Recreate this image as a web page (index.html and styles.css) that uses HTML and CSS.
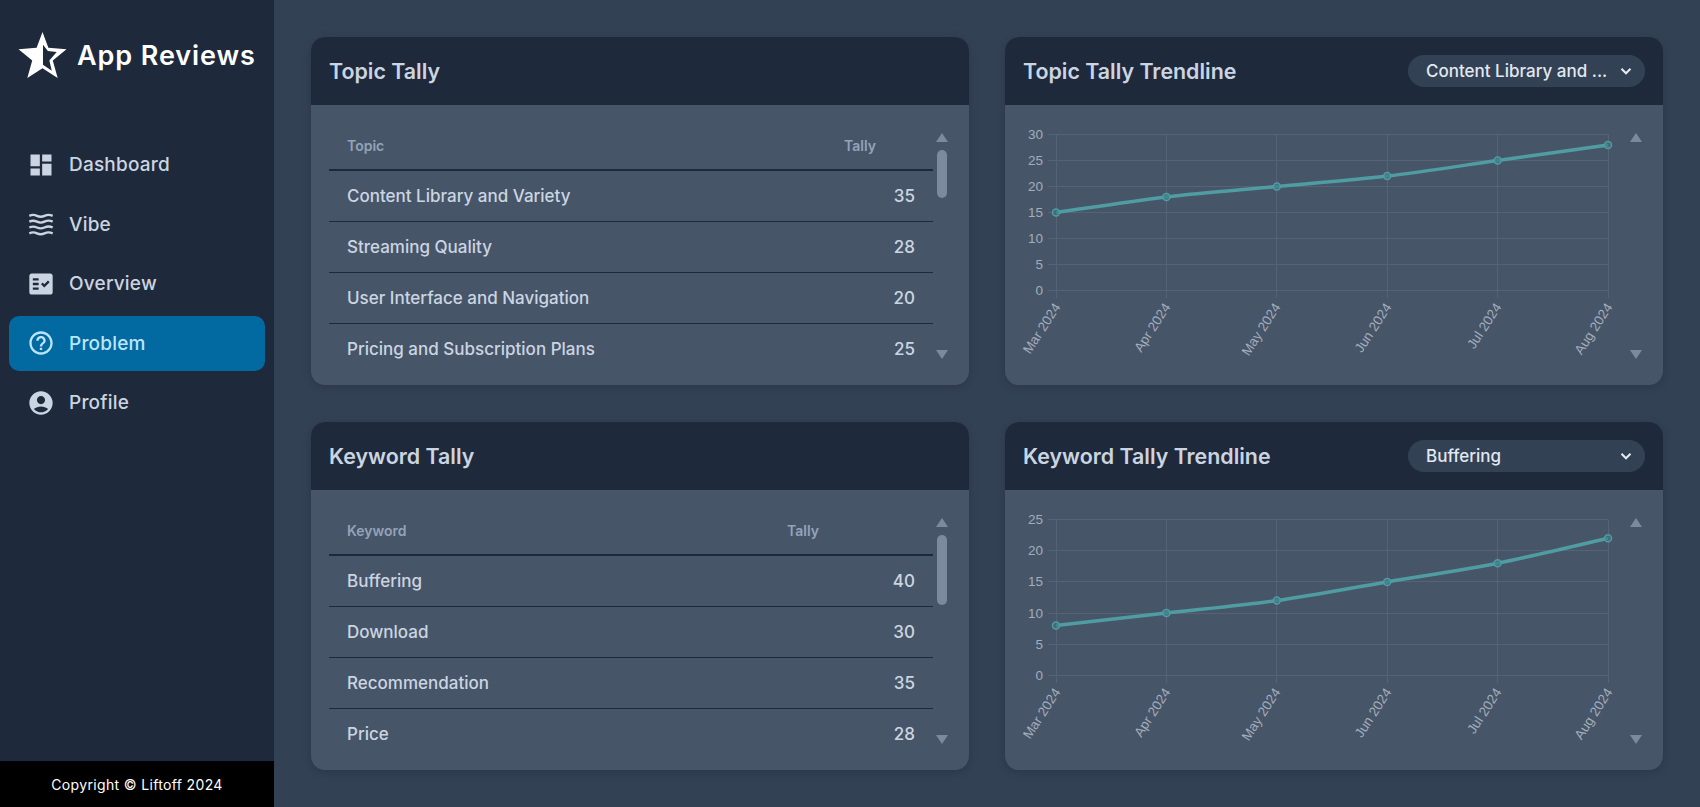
FILE: index.html
```html
<!DOCTYPE html>
<html lang="en">

<head>
    <meta charset="UTF-8">
    <meta name="viewport" content="width=device-width, initial-scale=1.0">
    <title>App Reviews - Problem</title>
    <link rel="stylesheet" href="styles.css">
</head>

<body>
    <aside class="sidebar">
        <div class="logo">
            <svg class="logo-star" viewBox="0 0 50 47">
                <path fill="#fff" fill-rule="evenodd" d="M25 0l6 16 18.500 1.500-14 11.500 5 18-15.500-10-15.500 10 5-18-14-11.500 18.500-1.500zM25.500 13v20.500l9 6-2.500-10.500 7.500-8.500-9-1z" />
            </svg>
            <span class="logo-text">App Reviews</span>
        </div>

        <nav class="nav">
            <a class="nav-item">
                <svg viewBox="0 0 24 24"><path d="M3 13h8V3H3v10zm0 8h8v-6H3v6zm10 0h8V11h-8v10zm0-18v6h8V3h-8z" /></svg>
                Dashboard
            </a>
            <a class="nav-item">
                <svg viewBox="0 0 24 24"><path class="wave" d="M2 5c2.500-1.200 4-1.200 6.500 0s4 1.200 6.500 0 4.500-1.200 7 0M2 10c2.500-1.200 4-1.200 6.500 0s4 1.200 6.500 0 4.500-1.200 7 0M2 15c2.500-1.200 4-1.200 6.500 0s4 1.200 6.500 0 4.500-1.200 7 0M2 20c2.500-1.200 4-1.200 6.500 0s4 1.200 6.500 0 4.500-1.200 7 0" /></svg>
                Vibe
            </a>
            <a class="nav-item">
                <svg viewBox="0 0 24 24"><path d="M20 3H4c-1.100 0-2 .9-2 2v14c0 1.100.9 2 2 2h16c1.100 0 2-.9 2-2V5c0-1.100-.9-2-2-2zM10 17H5v-2h5v2zm0-4H5v-2h5v2zm0-4H5V7h5v2zm4.820 6L12 12.160l1.410-1.410 1.410 1.420L17.990 9l1.420 1.420L14.820 15z" /></svg>
                Overview
            </a>
            <a class="nav-item active">
                <svg viewBox="0 0 24 24"><path d="M11 18h2v-2h-2v2zm1-16C6.480 2 2 6.480 2 12s4.480 10 10 10 10-4.480 10-10S17.520 2 12 2zm0 18c-4.410 0-8-3.590-8-8s3.590-8 8-8 8 3.590 8 8-3.590 8-8 8zm0-14c-2.210 0-4 1.790-4 4h2c0-1.100.9-2 2-2s2 .9 2 2c0 2-3 1.750-3 5h2c0-2.250 3-2.500 3-5 0-2.210-1.790-4-4-4z" /></svg>
                Problem
            </a>
            <a class="nav-item">
                <svg viewBox="0 0 24 24"><path d="M12 2C6.480 2 2 6.480 2 12s4.480 10 10 10 10-4.480 10-10S17.520 2 12 2zm0 4c1.930 0 3.500 1.570 3.500 3.500S13.930 13 12 13s-3.500-1.570-3.500-3.500S10.070 6 12 6zm0 14c-2.030 0-4.430-.82-6.140-2.880C7.550 15.800 9.680 15 12 15s4.450.8 6.140 2.120C16.430 19.180 14.030 20 12 20z" /></svg>
                Profile
            </a>
        </nav>

        <footer class="copyright">Copyright © Liftoff 2024</footer>
    </aside>

    <main class="main">
        <!-- Topic table -->
        <section class="card">
            <header class="card-header">
                <h2>Topic Tally</h2>
            </header>
            <div class="card-body">
                <div class="table-wrap">
                    <table class="tally-table topic-table">
                        <thead>
                            <tr><th>Topic</th><th>Tally</th></tr>
                        </thead>
                        <tbody>
                            <tr><td>Content Library and Variety</td><td class="num">35</td></tr>
                            <tr><td>Streaming Quality</td><td class="num">28</td></tr>
                            <tr><td>User Interface and Navigation</td><td class="num">20</td></tr>
                            <tr><td>Pricing and Subscription Plans</td><td class="num">25</td></tr>
                        </tbody>
                    </table>
                </div>
                <div class="scrollbar">
                    <span class="arrow-up"></span>
                    <span class="thumb"></span>
                    <span class="arrow-down"></span>
                </div>
            </div>
        </section>

        <!-- Topic trendline -->
        <section class="card">
            <header class="card-header">
                <h2>Topic Tally Trendline</h2>
                <div class="select">
                    <span class="select-text">Content Library and ...</span>
                    <svg viewBox="0 0 24 24"><path d="M6 9l6 6 6-6" /></svg>
                </div>
            </header>
            <div class="card-body">
                <svg class="chart" viewBox="0 0 604 250">
                    <g class="grid">
                        <path d="M25 12.500H585M25 38.500H585M25 64.500H585M25 90.500H585M25 116.500H585M25 142.500H585M25 168.500H585" />
                        <path d="M33.500 12.500V176M143.500 12.500V176M253.500 12.500V176M364.500 12.500V176M474.500 12.500V176M585.500 12.500V176" />
                    </g>
                    <g class="y-labels">
                        <text x="20" y="17">30</text>
                        <text x="20" y="43">25</text>
                        <text x="20" y="69">20</text>
                        <text x="20" y="95">15</text>
                        <text x="20" y="121">10</text>
                        <text x="20" y="147">5</text>
                        <text x="20" y="173">0</text>
                    </g>
                    <g class="x-labels">
                        <text transform="translate(38 185) rotate(-57)">Mar 2024</text>
                        <text transform="translate(148 185) rotate(-57)">Apr 2024</text>
                        <text transform="translate(258 185) rotate(-57)">May 2024</text>
                        <text transform="translate(369 185) rotate(-57)">Jun 2024</text>
                        <text transform="translate(479 185) rotate(-57)">Jul 2024</text>
                        <text transform="translate(590 185) rotate(-57)">Aug 2024</text>
                    </g>
                    <path class="line" d="M33 90.500C49.600 88.200 110.300 78.800 143.400 74.900C176.500 71 220.700 67.600 253.800 64.500C286.900 61.400 331.100 58 364.200 54.100C397.300 50.200 441.500 43.200 474.600 38.500C507.700 33.800 568.400 25.200 585 22.900" />
                    <g class="points">
                        <circle cx="33" cy="90.500" r="3.500" />
                        <circle cx="143.400" cy="74.900" r="3.500" />
                        <circle cx="253.800" cy="64.500" r="3.500" />
                        <circle cx="364.200" cy="54.100" r="3.500" />
                        <circle cx="474.600" cy="38.500" r="3.500" />
                        <circle cx="585" cy="22.900" r="3.500" />
                    </g>
                </svg>
                <div class="scrollbar">
                    <span class="arrow-up"></span>
                    <span class="arrow-down"></span>
                </div>
            </div>
        </section>

        <!-- Keyword table -->
        <section class="card">
            <header class="card-header">
                <h2>Keyword Tally</h2>
            </header>
            <div class="card-body">
                <div class="table-wrap">
                    <table class="tally-table keyword-table">
                        <thead>
                            <tr><th>Keyword</th><th>Tally</th></tr>
                        </thead>
                        <tbody>
                            <tr><td>Buffering</td><td class="num">40</td></tr>
                            <tr><td>Download</td><td class="num">30</td></tr>
                            <tr><td>Recommendation</td><td class="num">35</td></tr>
                            <tr><td>Price</td><td class="num">28</td></tr>
                        </tbody>
                    </table>
                </div>
                <div class="scrollbar">
                    <span class="arrow-up"></span>
                    <span class="thumb thumb-long"></span>
                    <span class="arrow-down"></span>
                </div>
            </div>
        </section>

        <!-- Keyword trendline -->
        <section class="card">
            <header class="card-header">
                <h2>Keyword Tally Trendline</h2>
                <div class="select">
                    <span class="select-text">Buffering</span>
                    <svg viewBox="0 0 24 24"><path d="M6 9l6 6 6-6" /></svg>
                </div>
            </header>
            <div class="card-body">
                <svg class="chart" viewBox="0 0 604 250">
                    <g class="grid">
                        <path d="M25 12.500H585M25 43.500H585M25 74.500H585M25 106.500H585M25 137.500H585M25 168.500H585" />
                        <path d="M33.500 12.500V176M143.500 12.500V176M253.500 12.500V176M364.500 12.500V176M474.500 12.500V176M585.500 12.500V176" />
                    </g>
                    <g class="y-labels">
                        <text x="20" y="17">25</text>
                        <text x="20" y="48">20</text>
                        <text x="20" y="79">15</text>
                        <text x="20" y="111">10</text>
                        <text x="20" y="142">5</text>
                        <text x="20" y="173">0</text>
                    </g>
                    <g class="x-labels">
                        <text transform="translate(38 185) rotate(-57)">Mar 2024</text>
                        <text transform="translate(148 185) rotate(-57)">Apr 2024</text>
                        <text transform="translate(258 185) rotate(-57)">May 2024</text>
                        <text transform="translate(369 185) rotate(-57)">Jun 2024</text>
                        <text transform="translate(479 185) rotate(-57)">Jul 2024</text>
                        <text transform="translate(590 185) rotate(-57)">Aug 2024</text>
                    </g>
                    <path class="line" d="M33 118.600C49.600 116.700 110.300 109.850 143.400 106.100C176.500 102.350 220.700 98.300 253.800 93.600C286.900 88.900 331.100 80.500 364.200 74.900C397.300 69.300 441.500 62.800 474.600 56.200C507.700 49.600 568.400 35 585 31.200" />
                    <g class="points">
                        <circle cx="33" cy="118.600" r="3.500" />
                        <circle cx="143.400" cy="106.100" r="3.500" />
                        <circle cx="253.800" cy="93.600" r="3.500" />
                        <circle cx="364.200" cy="74.900" r="3.500" />
                        <circle cx="474.600" cy="56.200" r="3.500" />
                        <circle cx="585" cy="31.200" r="3.500" />
                    </g>
                </svg>
                <div class="scrollbar">
                    <span class="arrow-up"></span>
                    <span class="arrow-down"></span>
                </div>
            </div>
        </section>
    </main>
</body>

</html>
```

FILE: styles.css
```css
/* General Styles */
* {
    box-sizing: border-box;
}

body {
    font-family: Inter, "Liberation Sans", sans-serif;
    background-color: #334155;
    color: #cbd5e1;
    margin: 0;
    height: 807px;
    display: flex;
    overflow: hidden;
}

/* Sidebar */
.sidebar {
    width: 274px;
    flex-shrink: 0;
    background-color: #1e293b;
    display: flex;
    flex-direction: column;
}

.logo {
    display: flex;
    align-items: center;
    gap: 10px;
    height: 46px;
    margin: 32px 0 59px 18px;
}

.logo-star {
    width: 49px;
    height: 46px;
}

.logo-text {
    color: #fff;
    font-size: 27px;
    font-weight: 600;
    letter-spacing: 0.9px;
}

.nav {
    display: flex;
    flex-direction: column;
    gap: 4.5px;
    flex: 1;
    padding: 0 9px;
}

.nav-item {
    display: flex;
    align-items: center;
    gap: 14px;
    height: 55px;
    padding-left: 18px;
    border-radius: 10px;
    font-size: 19px;
    font-weight: 500;
    letter-spacing: 0.2px;
    color: #cbd5e1;
}

.nav-item svg {
    width: 28px;
    height: 28px;
    fill: currentColor;
}

.nav-item .wave {
    fill: none;
    stroke: currentColor;
    stroke-width: 2;
}

.nav-item.active {
    background-color: #0369a1;
    color: #bae6fd;
}

.copyright {
    height: 46px;
    background-color: #000;
    color: #fff;
    font-size: 14px;
    letter-spacing: 0.35px;
    display: flex;
    align-items: center;
    justify-content: center;
}

/* Grid of cards */
.main {
    flex: 1;
    display: grid;
    grid-template-columns: 658px 658px;
    grid-template-rows: 348px 348px;
    gap: 37px 36px;
    padding: 37px 36px 0 37px;
}

.card {
    border-radius: 14px;
    overflow: hidden;
    background-color: #475569;
    box-shadow: 0 2px 8px rgba(0, 0, 0, 0.15);
    display: flex;
    flex-direction: column;
}

.card-header {
    height: 68px;
    flex-shrink: 0;
    background-color: #1e293b;
    display: flex;
    align-items: center;
    justify-content: space-between;
    padding: 0 18px;
}

.card-header h2 {
    margin: 0;
    font-size: 21.4px;
    font-weight: 600;
    color: #cbd5e1;
}

.select {
    width: 237px;
    height: 32px;
    background-color: #334155;
    border-radius: 16px;
    display: flex;
    align-items: center;
    justify-content: space-between;
    padding: 0 10px 0 18px;
    color: #e2e8f0;
    font-size: 17px;
    font-weight: 500;
}

.select svg {
    width: 18px;
    height: 18px;
    fill: none;
    stroke: #e2e8f0;
    stroke-width: 2.8;
}

.card-body {
    flex: 1;
    display: flex;
    padding: 17px 18px 13px;
    min-height: 0;
}

/* Tables */
.table-wrap {
    flex: 1;
}

.tally-table {
    width: 100%;
    border-collapse: collapse;
    table-layout: fixed;
}

.tally-table th {
    height: 48px;
    padding: 0 18px;
    text-align: left;
    font-size: 14px;
    font-weight: 600;
    color: #94a3b8;
    border-bottom: 2px solid #1e293b;
}

.topic-table th:last-child {
    width: 107px;
}

.keyword-table th:last-child {
    width: 164px;
}

.tally-table td {
    height: 51px;
    padding: 0 18px;
    font-size: 17px;
    font-weight: 500;
    color: #cbd5e1;
    border-bottom: 1px solid #1e293b;
}

.tally-table tr:last-child td {
    border-bottom: none;
}

.tally-table .num {
    text-align: right;
}

/* Scrollbars */
.scrollbar {
    width: 18px;
    flex-shrink: 0;
    display: flex;
    flex-direction: column;
    align-items: center;
    padding: 11px 0 13px;
}

.arrow-up,
.arrow-down {
    width: 0;
    height: 0;
    border-left: 6px solid transparent;
    border-right: 6px solid transparent;
}

.arrow-up {
    border-bottom: 9px solid #7c8a9e;
}

.arrow-down {
    border-top: 9px solid #7c8a9e;
    margin-top: auto;
}

.thumb {
    width: 10px;
    height: 48px;
    margin-top: 8px;
    border-radius: 5px;
    background-color: #7c8a9e;
}

.thumb-long {
    height: 70px;
}

/* Charts */
.chart {
    flex: 1;
    width: 604px;
    height: 250px;
}

.grid path {
    fill: none;
    stroke: #566376;
    stroke-width: 1;
}

.y-labels text,
.x-labels text {
    font-family: "Liberation Sans", Arial, sans-serif;
    font-size: 13.5px;
    fill: #a3adbb;
    text-anchor: end;
}

.line {
    fill: none;
    stroke: #4f9ca3;
    stroke-width: 3.5;
}

.points circle {
    fill: rgba(60, 120, 130, 0.6);
    stroke: #4f9ca3;
    stroke-width: 1.5;
}
```
